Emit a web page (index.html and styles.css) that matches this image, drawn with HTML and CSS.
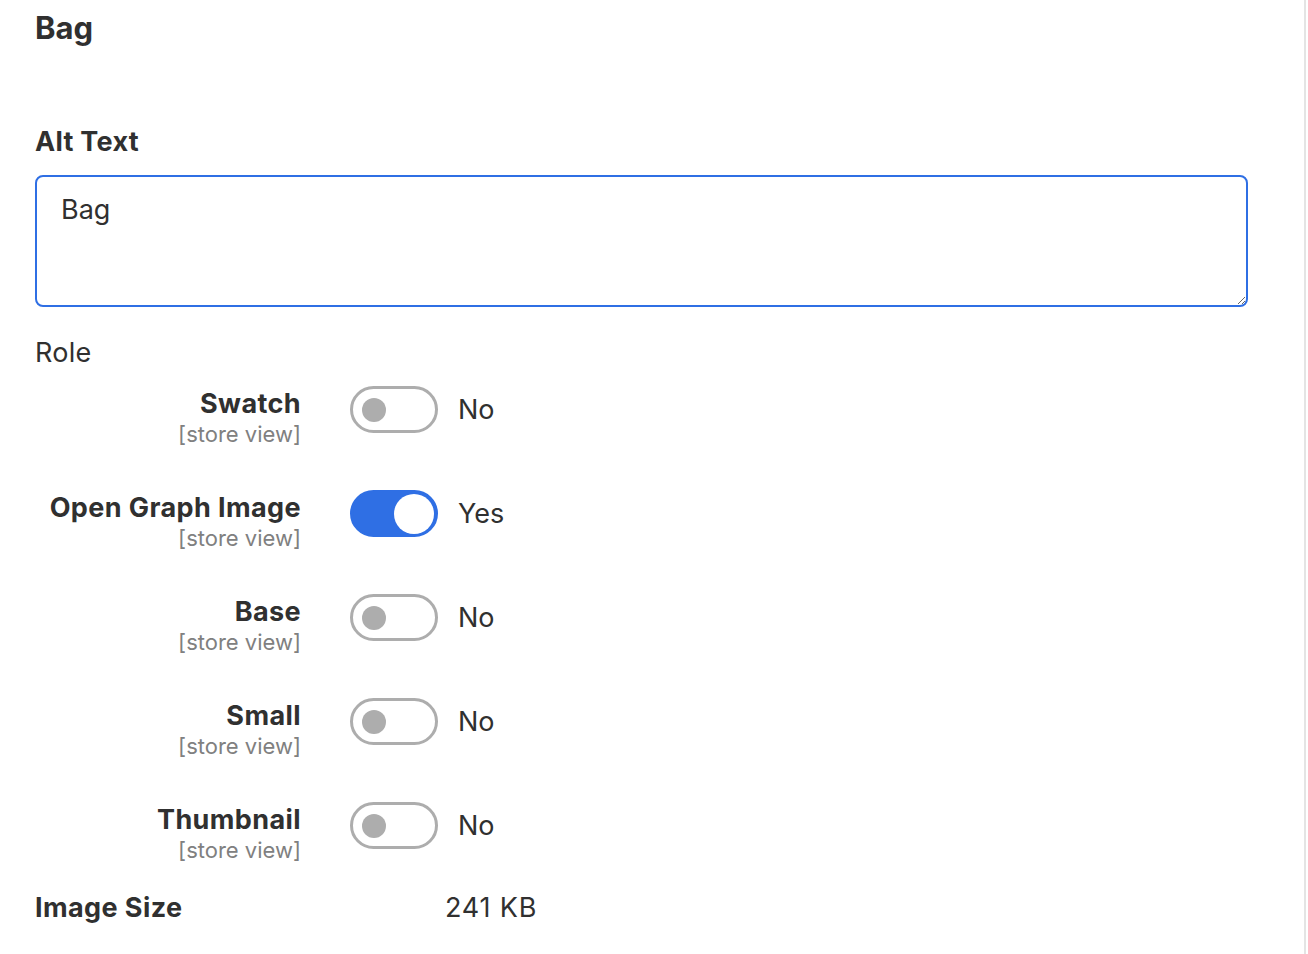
FILE: index.html
```html
<!DOCTYPE html>
<html>
<head>
    <meta charset="UTF-8">
    <title>Bag</title>
    <link rel="stylesheet" href="styles.css">
</head>
<body>
    <div class="panel">
        <h2 class="image-title">Bag</h2>

        <div class="field">
            <label class="field-label" for="alt">Alt Text</label>
            <textarea id="alt" class="alt-input">Bag</textarea>
        </div>

        <div class="role-title">Role</div>
        <div class="roles">
            <div class="role-row">
                <div class="role-label">
                    <span class="role-name">Swatch</span>
                    <span class="role-scope">[store view]</span>
                </div>
                <span class="toggle"><span class="knob"></span></span>
                <span class="toggle-text">No</span>
            </div>
            <div class="role-row">
                <div class="role-label">
                    <span class="role-name">Open Graph Image</span>
                    <span class="role-scope">[store view]</span>
                </div>
                <span class="toggle on"><span class="knob"></span></span>
                <span class="toggle-text">Yes</span>
            </div>
            <div class="role-row">
                <div class="role-label">
                    <span class="role-name">Base</span>
                    <span class="role-scope">[store view]</span>
                </div>
                <span class="toggle"><span class="knob"></span></span>
                <span class="toggle-text">No</span>
            </div>
            <div class="role-row">
                <div class="role-label">
                    <span class="role-name">Small</span>
                    <span class="role-scope">[store view]</span>
                </div>
                <span class="toggle"><span class="knob"></span></span>
                <span class="toggle-text">No</span>
            </div>
            <div class="role-row">
                <div class="role-label">
                    <span class="role-name">Thumbnail</span>
                    <span class="role-scope">[store view]</span>
                </div>
                <span class="toggle"><span class="knob"></span></span>
                <span class="toggle-text">No</span>
            </div>
        </div>

        <div class="size-row">
            <span class="size-label">Image Size</span>
            <span class="size-value">241 KB</span>
        </div>
    </div>
</body>
</html>
```
FILE: styles.css
```css
html, body {
    height: 100%;
}

body {
    margin: 0;
    background: #fff;
    font-family: Inter, 'Noto Sans', sans-serif;
    color: #303030;
}

.panel {
    box-sizing: border-box;
    width: 1306px;
    min-height: 100%;
    padding: 6px 58px 0 35px;
    border-right: 2px solid #e4e4e4;
}

.image-title {
    margin: 0;
    font-size: 31px;
    line-height: 44px;
    font-weight: 700;
}

.field {
    margin-top: 76px;
}

.field-label {
    display: block;
    font-size: 27px;
    line-height: 32px;
    font-weight: 700;
    letter-spacing: 0.3px;
}

.alt-input {
    display: block;
    box-sizing: border-box;
    width: 1213px;
    height: 132px;
    margin-top: 17px;
    padding: 16px 24px 12px;
    border: 2px solid #2f6fe4;
    border-radius: 8px;
    font-family: inherit;
    font-size: 27px;
    color: #303030;
    outline: none;
}

.role-title {
    margin-top: 30px;
    font-size: 27px;
    line-height: 32px;
    letter-spacing: 0.3px;
}

.roles {
    margin-top: 20px;
}

.role-row {
    display: flex;
    align-items: flex-start;
    height: 104px;
}

.role-label {
    display: flex;
    flex-direction: column;
    align-items: flex-end;
    width: 266px;
}

.role-name {
    font-size: 27px;
    line-height: 30px;
    font-weight: 700;
    letter-spacing: 0.4px;
}

.role-scope {
    font-size: 22px;
    line-height: 30px;
    color: #808080;
}

.toggle {
    box-sizing: border-box;
    display: flex;
    align-items: center;
    width: 88px;
    height: 47px;
    margin: -3px 21px 0 49px;
    padding: 0 9px;
    border: 3px solid #adadad;
    border-radius: 24px;
}

.knob {
    width: 24px;
    height: 24px;
    border-radius: 50%;
    background: #adadad;
}

.toggle.on {
    justify-content: flex-end;
    padding: 0 1px;
    border-color: #2f6fe4;
    background: #2f6fe4;
}

.toggle.on .knob {
    width: 40px;
    height: 40px;
    background: #fff;
}

.toggle-text {
    margin-top: -4px;
    margin-left: -1px;
    font-size: 27px;
    line-height: 50px;
}

.size-row {
    display: flex;
    margin-top: -17px;
    font-size: 27px;
    line-height: 32px;
}

.size-label {
    width: 410px;
    font-weight: 700;
    letter-spacing: 0.4px;
}

.size-value {
    letter-spacing: 0.8px;
}
```
